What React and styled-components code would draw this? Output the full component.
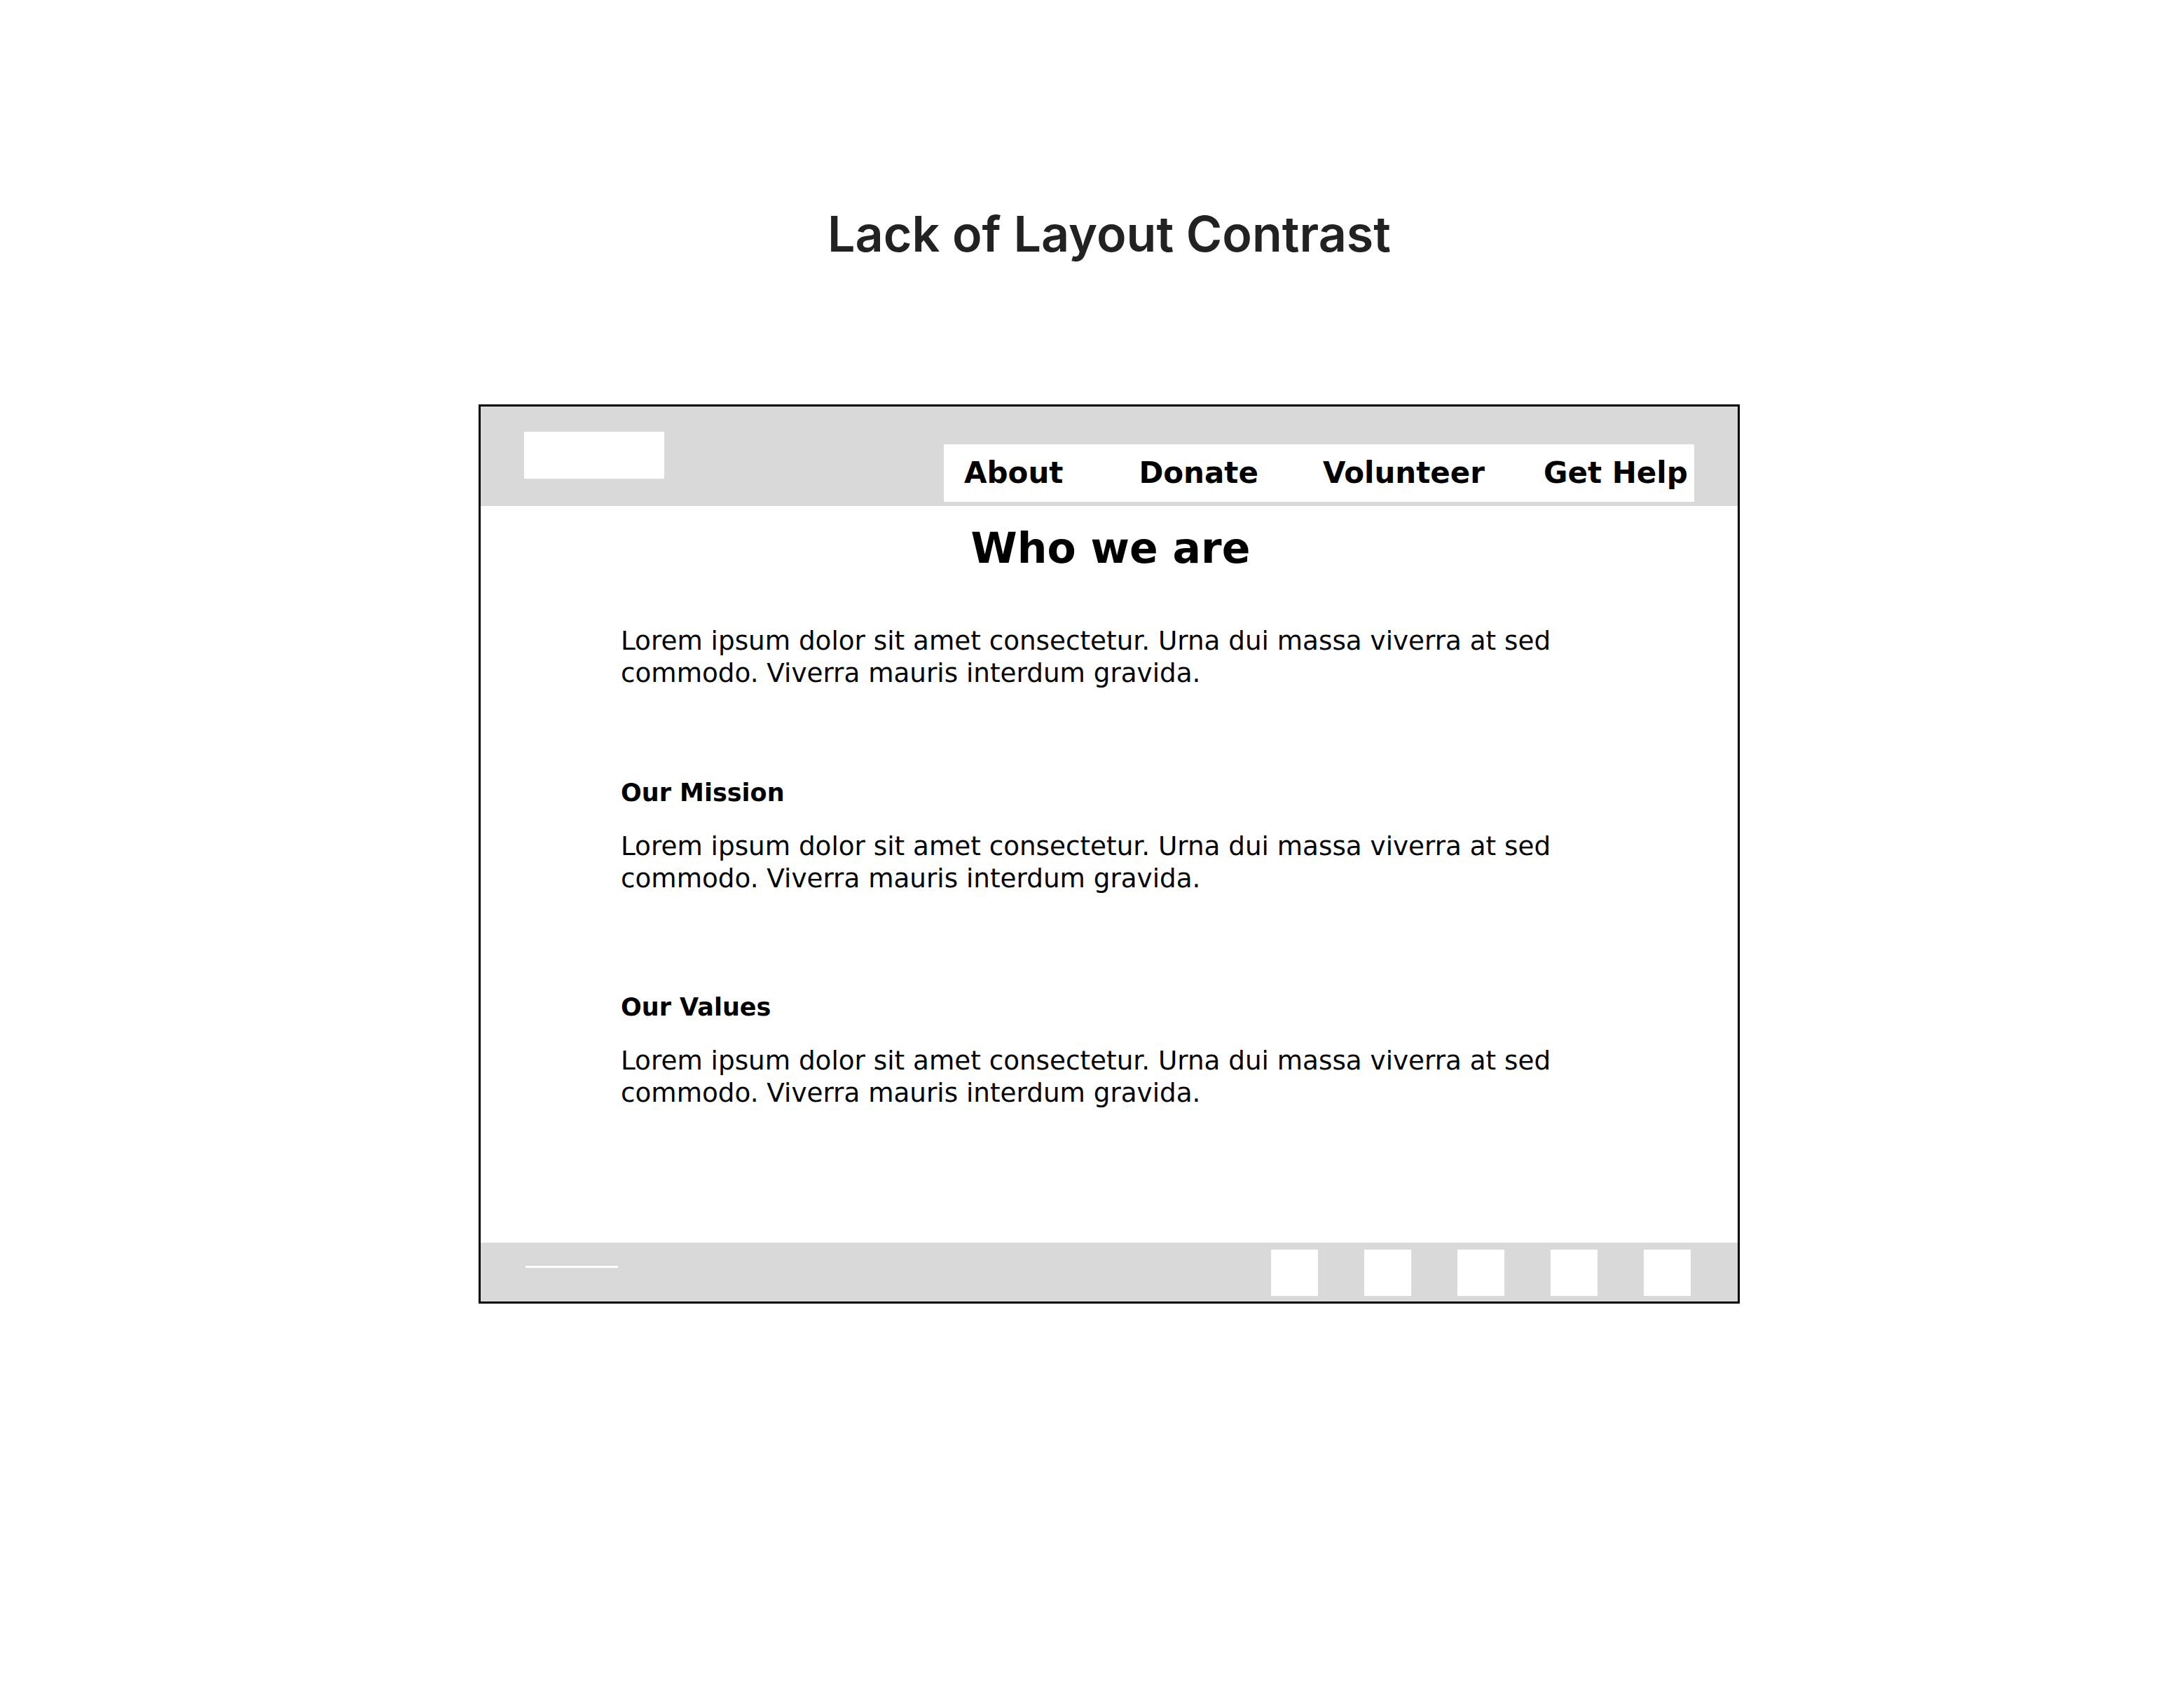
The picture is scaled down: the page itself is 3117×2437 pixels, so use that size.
import styled, { createGlobalStyle } from 'styled-components';

const GlobalStyle = createGlobalStyle`
  body {
    margin: 0;
    background: #ffffff;
    font-family: 'DejaVu Sans', 'Noto Sans', sans-serif;
  }
`;

const Page = styled.div`
  width: 1800px;
  margin-left: 683px;
  padding-top: 298px;
`;

const PageTitle = styled.h1`
  margin: 0 0 208px;
  font-family: Inter, 'Liberation Sans', sans-serif;
  font-size: 70px;
  font-weight: 600;
  line-height: 71px;
  color: #222222;
  text-align: center;
`;

const Frame = styled.div`
  box-sizing: border-box;
  width: 1800px;
  height: 1283px;
  border: 3px solid #000000;
  display: flex;
  flex-direction: column;
`;

const Header = styled.header`
  box-sizing: border-box;
  height: 142px;
  background: #d9d9d9;
  display: flex;
  justify-content: space-between;
  align-items: flex-start;
  padding: 36px 62px 0 62px;
`;

const Logo = styled.div`
  width: 200px;
  height: 67px;
  background: #ffffff;
`;

const Nav = styled.nav`
  box-sizing: border-box;
  width: 1071px;
  height: 82px;
  margin-top: 18px;
  background: #ffffff;
  display: flex;
  align-items: center;
  padding: 0 0 0 29px;
`;

const NavLink = styled.span`
  flex-shrink: 0;
  margin-right: ${(p) => p.$gap}px;
  font-size: 42px;
  font-weight: 700;
  line-height: 1;
  white-space: nowrap;
  color: #000000;
`;

const Content = styled.main`
  flex: 1;
  padding: 0 196px 0 200px;
`;

const SectionTitle = styled.h2`
  margin: 24px 0 0;
  font-size: 60px;
  font-weight: 700;
  line-height: 72px;
  color: #000000;
  text-align: center;
`;

const Block = styled.section`
  margin-top: ${(p) => p.$top}px;
`;

const BlockHeading = styled.h3`
  margin: 0 0 30px;
  font-size: 35px;
  font-weight: 700;
  line-height: 46px;
  color: #000000;
`;

const Text = styled.p`
  margin: 0;
  max-width: 1390px;
  font-size: 37.3px;
  font-weight: 400;
  line-height: 46px;
  color: #000000;
`;

const Footer = styled.footer`
  box-sizing: border-box;
  height: 84px;
  background: #d9d9d9;
  display: flex;
  justify-content: space-between;
  align-items: flex-start;
  padding: 0 67px 0 64px;
`;

const FooterLine = styled.div`
  width: 132px;
  height: 3px;
  margin-top: 33px;
  background: #ffffff;
`;

const Socials = styled.div`
  display: flex;
  gap: 66px;
  margin-top: 10px;
`;

const SocialBox = styled.div`
  width: 67px;
  height: 66px;
  background: #ffffff;
`;

const lorem =
  'Lorem ipsum dolor sit amet consectetur. Urna dui massa viverra at sed commodo. Viverra mauris interdum gravida.';

const links = [
  { label: 'About', gap: 108 },
  { label: 'Donate', gap: 92 },
  { label: 'Volunteer', gap: 84 },
  { label: 'Get Help', gap: 0 },
];

const sections = [
  { title: 'Our Mission', top: 125 },
  { title: 'Our Values', top: 138 },
];

export default function App() {
  return (
    <>
      <GlobalStyle />
      <Page>
        <PageTitle>Lack of Layout Contrast</PageTitle>
        <Frame>
          <Header>
            <Logo />
            <Nav>
              {links.map((link) => (
                <NavLink key={link.label} $gap={link.gap}>
                  {link.label}
                </NavLink>
              ))}
            </Nav>
          </Header>
          <Content>
            <SectionTitle>Who we are</SectionTitle>
            <Block $top={73}>
              <Text>{lorem}</Text>
            </Block>
            {sections.map((s) => (
              <Block key={s.title} $top={s.top}>
                <BlockHeading>{s.title}</BlockHeading>
                <Text>{lorem}</Text>
              </Block>
            ))}
          </Content>
          <Footer>
            <FooterLine />
            <Socials>
              {[0, 1, 2, 3, 4].map((i) => (
                <SocialBox key={i} />
              ))}
            </Socials>
          </Footer>
        </Frame>
      </Page>
    </>
  );
}
